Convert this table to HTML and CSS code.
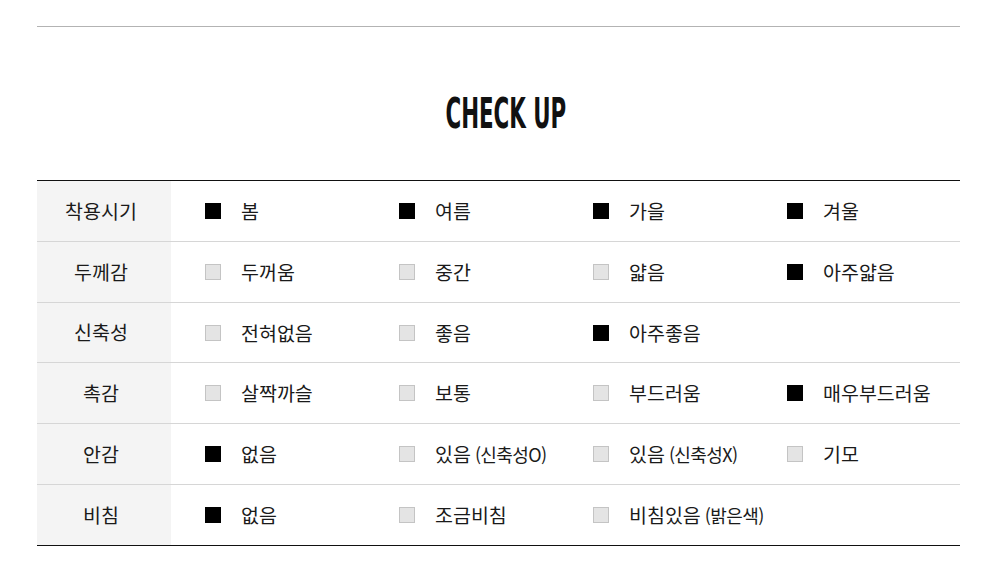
FILE: index.html
```html
<!DOCTYPE html>
<html lang="ko">
<head>
<meta charset="utf-8">
<link rel="stylesheet" href="styles.css">
</head>
<body>
<div class="page">
  <div class="topline"></div>
  <h2 class="title"><span>CHECK UP</span></h2>
  <div class="table">
    <div class="row">
      <div class="head">착용시기</div>
      <div class="opts">
        <div class="opt"><i class="box on"></i>봄</div>
        <div class="opt"><i class="box on"></i>여름</div>
        <div class="opt"><i class="box on"></i>가을</div>
        <div class="opt"><i class="box on"></i>겨울</div>
      </div>
    </div>
    <div class="row">
      <div class="head">두께감</div>
      <div class="opts">
        <div class="opt"><i class="box"></i>두꺼움</div>
        <div class="opt"><i class="box"></i>중간</div>
        <div class="opt"><i class="box"></i>얇음</div>
        <div class="opt"><i class="box on"></i>아주얇음</div>
      </div>
    </div>
    <div class="row short">
      <div class="head">신축성</div>
      <div class="opts">
        <div class="opt"><i class="box"></i>전혀없음</div>
        <div class="opt"><i class="box"></i>좋음</div>
        <div class="opt"><i class="box on"></i>아주좋음</div>
      </div>
    </div>
    <div class="row">
      <div class="head">촉감</div>
      <div class="opts">
        <div class="opt"><i class="box"></i>살짝까슬</div>
        <div class="opt"><i class="box"></i>보통</div>
        <div class="opt"><i class="box"></i>부드러움</div>
        <div class="opt"><i class="box on"></i>매우부드러움</div>
      </div>
    </div>
    <div class="row">
      <div class="head">안감</div>
      <div class="opts">
        <div class="opt"><i class="box on"></i>없음</div>
        <div class="opt"><i class="box"></i>있음<small>(신축성O)</small></div>
        <div class="opt"><i class="box"></i>있음<small>(신축성X)</small></div>
        <div class="opt"><i class="box"></i>기모</div>
      </div>
    </div>
    <div class="row last">
      <div class="head">비침</div>
      <div class="opts">
        <div class="opt"><i class="box on"></i>없음</div>
        <div class="opt"><i class="box"></i>조금비침</div>
        <div class="opt"><i class="box"></i>비침있음<small>(밝은색)</small></div>
      </div>
    </div>
  </div>
</div>
</body>
</html>
```

FILE: styles.css
```css
html, body {
  margin: 0;
  padding: 0;
  background: #ffffff;
}
body {
  font-family: "Noto Sans CJK KR", "Noto Sans", sans-serif;
  color: #1a1a1a;
}
.page {
  width: 923px;
  margin-left: 37px;
  padding-top: 26px;
}
.topline {
  height: 1px;
  background: #b3b3b3;
}
.title {
  margin: 0;
  height: 153px;
  padding-top: 20px;
  padding-left: 14px;
  box-sizing: border-box;
  display: flex;
  align-items: center;
  justify-content: center;
}
.title span {
  display: inline-block;
  font-family: "DejaVu Sans", sans-serif;
  font-stretch: condensed;
  font-weight: bold;
  font-size: 42px;
  line-height: 1;
  color: #111111;
  transform: scaleX(0.565);
}
.table {
  border-top: 1px solid #111111;
  border-bottom: 1px solid #111111;
}
.row {
  display: flex;
  height: 60px;
  border-bottom: 1px solid #d6d6d6;
}
.row.short {
  height: 59px;
}
.row.last {
  border-bottom: none;
}
.head {
  width: 134px;
  flex: none;
  background: #f4f4f4;
  display: flex;
  align-items: center;
  justify-content: center;
  font-size: 19.5px;
  padding-bottom: 2px;
  padding-right: 6px;
  box-sizing: border-box;
  color: #1a1a1a;
}
.opts {
  display: grid;
  grid-template-columns: repeat(4, 194px);
  padding-left: 34px;
  align-items: center;
}
.opt {
  display: flex;
  align-items: center;
  font-size: 19.5px;
  line-height: 24px;
  color: #1a1a1a;
}
.opt small {
  font-size: 18px;
  margin-left: 4px;
  letter-spacing: -0.6px;
}
.box {
  width: 16px;
  height: 16px;
  box-sizing: border-box;
  border: 1px solid #c4c4c4;
  background: #e4e4e4;
  margin-right: 20px;
  flex: none;
}
.box.on {
  background: #000000;
  border-color: #000000;
}
```
